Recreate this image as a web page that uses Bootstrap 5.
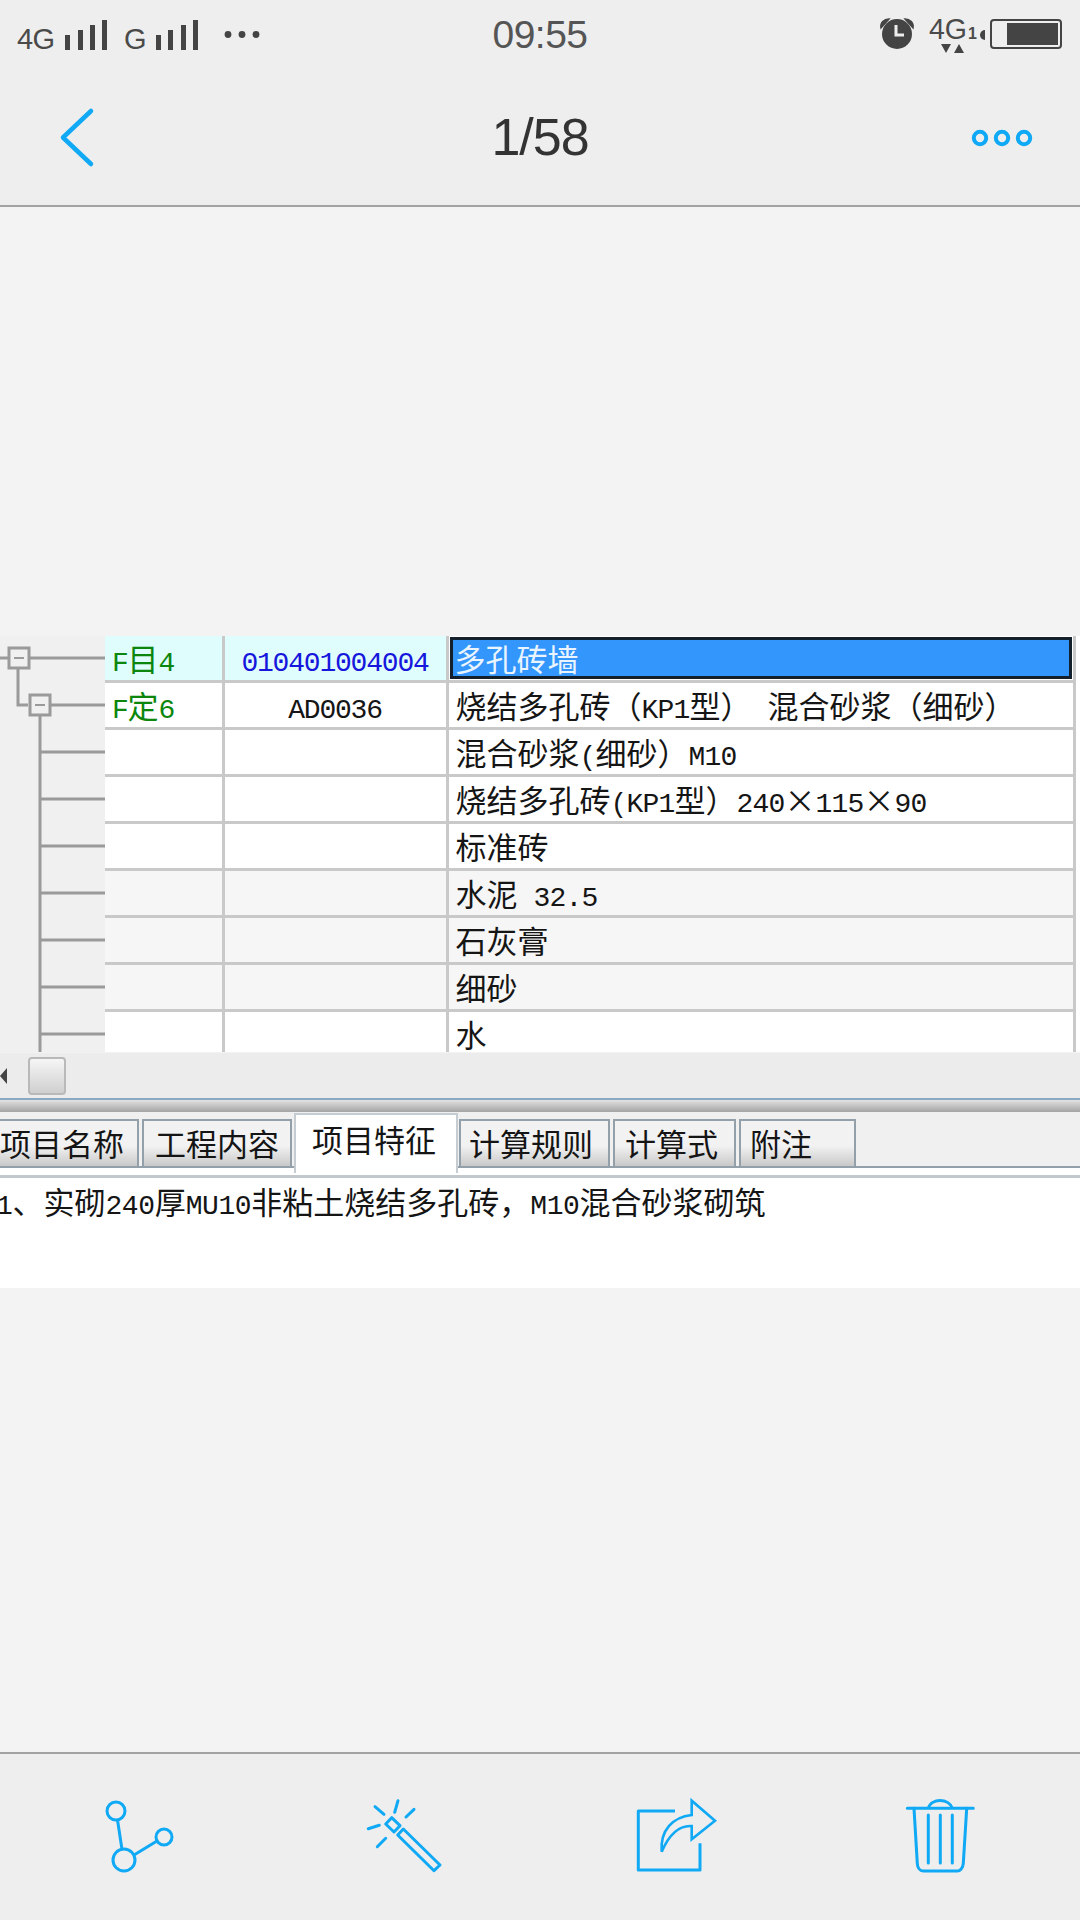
<!DOCTYPE html>
<html lang="zh-CN">
<head>
    <meta charset="UTF-8">
    <meta name="viewport" content="width=device-width, initial-scale=1.0">
    <title>1/58</title>
    <link href="https://cdn.jsdelivr.net/npm/bootstrap@5.3.0/dist/css/bootstrap.min.css" rel="stylesheet">
    <style>
        body {
            background-color: #f3f3f3;
            font-family: "Liberation Sans", Arial, sans-serif;
            width: 1080px;
        }
        .phone-page { height: 1920px; overflow: hidden; }
        .top-area { background: #eeeeee; height: 207px; border-bottom: 2px solid #a2a2a2; }
        .status-row { height: 68px; position: relative; }
        .status-icons { position: absolute; inset: 0; }
        .status-text { fill: #4a4a4a; font-family: "Liberation Sans", Arial, sans-serif; }
        .clock-text { font-size: 39px; color: #555; line-height: 70px; letter-spacing: -.5px; }
        .title-row { height: 137px; position: relative; }
        .page-title { font-size: 52px; color: #333; letter-spacing: -1px; line-height: 138px; }
        .title-icon { position: absolute; top: 0; }

        .viewer { padding-top: 429px; flex: 1 1 auto; }
        .tree-col { width: 105px; height: 416px; background: #f0f0f0; flex: none; }
        .grid-wrap { height: 416px; overflow: hidden; flex: 1 1 auto; background: #fff; }
        .quota-table, .desc-box, .sheet-tabs .nav-link {
            font-family: "Noto Sans CJK SC", "Liberation Sans", sans-serif;
            font-size: 31px;
            color: #151515;
        }
        .lat { font-family: "Liberation Mono", monospace; font-size: 28px; letter-spacing: -.8px; line-height: 1; }
        .code-cell .lat { letter-spacing: -1.2px; }
        .desc-box .lat { letter-spacing: -.4px; }
        .fw-x { font-feature-settings: "fwid"; font-family: "Noto Sans CJK SC", sans-serif; font-size: 31px; line-height: 1; }
        .quota-table { table-layout: fixed; width: 971px; margin: 0; border-collapse: collapse; }
        .quota-table > :not(caption) > * > * {
            padding: 0 0 0 7px;
            height: 47px;
            line-height: 44px;
            border: 3px solid #c9c9c9;
            border-top-width: 0;
            border-left-width: 0;
            white-space: nowrap;
            overflow: hidden;
            box-shadow: none;
            color: #151515;
        }
        .quota-table tr { --bs-table-bg: #fff; }
        .quota-table tr.row-cyan { --bs-table-bg: #dffdfd; }
        .quota-table tr.row-shade { --bs-table-bg: #f6f6f6; }
        .quota-table > tbody > tr.row-cyan > td { height: 45px; }
        .quota-table td.code-cell { text-align: center; padding-left: 0; }
        .quota-table td.kind-cell { color: #0c860c; }
        .quota-table td.kind-cell .lat { letter-spacing: -1.2px; }
        .quota-table td.blue-text { color: #1616dc; }
        .quota-table td.sel-host { padding: 0; background: #fff; }
        .sel-box {
            background: #3396fd;
            color: #eaf4ff;
            border: 3px solid #14202c;
            height: 42px;
            line-height: 36px;
            padding-left: 2px;
            margin: 1px 0 0 1px;
            width: 622px;
        }

        .scroll-row { height: 45px; background: #ececec; margin-top: 1px; position: relative; }
        .scroll-arrow {
            width: 0; height: 0;
            border-top: 8px solid transparent;
            border-bottom: 8px solid transparent;
            border-right: 7px solid #444;
        }
        .scroll-thumb {
            width: 38px; height: 38px;
            margin-left: 21px;
            border: 2px solid #b9b9b9;
            border-radius: 4px;
            background: linear-gradient(#f6f6f6, #cfcfcf);
        }
        .split-bar { height: 14px; border-top: 2px solid #8aa9c2; background: linear-gradient(#e2e2e2, #a4a4a4); }
        .tabs-zone { height: 56px; background: #f0f0f0; }
        .sheet-tabs { padding-top: 7px; border-bottom: 2px solid #93a0aa; height: 56px; flex-wrap: nowrap; gap: 3px; }
        .sheet-tabs .nav-link {
            height: 49px;
            line-height: 44px;
            padding: 0;
            margin: 0;
            border: 2px solid #93a0aa;
            border-radius: 0;
            background: linear-gradient(#f2f2f2 55%, #c9c9c9);
            text-align: left;
        }
        .sheet-tabs .nav-link.active {
            height: 60px;
            margin-top: -6px;
            line-height: 48px;
            background: #fff;
            border-color: #c5ccd2;
            border-bottom: 0;
            color: #151515;
            position: relative;
        }
        .tab-a { width: 142px; margin-left: -3px !important; padding-left: 1px !important; }
        .tab-b { width: 150px; padding-left: 11px !important; }
        .tab-c { width: 164px; padding-left: 16px !important; margin-left: -1px !important; }
        .tab-d { width: 151px; padding-left: 8px !important; margin-left: -2px !important; }
        .tab-e { width: 123px; padding-left: 10px !important; }
        .tab-f { width: 117px; padding-left: 9px !important; }
        .desc-gap { height: 10px; background: #fff; border-bottom: 3px solid #c3c8cc; }
        .desc-box { background: #fff; height: 110px; line-height: 40px; padding-top: 3px; white-space: nowrap; margin-left: -4px; }

        .bottom-bar { height: 168px; background: #eeeeee; border-top: 2px solid #a2a2a2; flex: none; padding-bottom: 4px; }
    </style>
</head>
<body>
    <div class="phone-page d-flex flex-column">

        <!-- status bar and title -->
        <div class="top-area flex-none">
            <div class="status-row text-center">
                <svg class="status-icons" width="1080" height="68">
                    <text class="status-text" x="17" y="49" font-size="29" textLength="38">4G</text>
                    <g fill="#444">
                        <rect x="65" y="35" width="5" height="15"/><rect x="78" y="30" width="5" height="20"/>
                        <rect x="90" y="25" width="5" height="25"/><rect x="102" y="20" width="5" height="30"/>
                    </g>
                    <text class="status-text" x="124" y="49" font-size="29">G</text>
                    <g fill="#444">
                        <rect x="156" y="35" width="5" height="15"/><rect x="168" y="30" width="5" height="20"/>
                        <rect x="181" y="25" width="5" height="25"/><rect x="193" y="20" width="5" height="30"/>
                        <circle cx="228" cy="34.5" r="3.4"/><circle cx="242" cy="34.5" r="3.4"/><circle cx="256" cy="34.5" r="3.4"/>
                    </g>
                    <!-- alarm -->
                    <g>
                        <circle cx="897" cy="34" r="15" fill="#444"/>
                        <path d="M896 25v10h8" fill="none" stroke="#eee" stroke-width="3"/>
                        <path d="M881 28c-1-5 3-9 8-9l-8 9zM913 28c1-5-3-9-8-9l8 9z" fill="#444" stroke="#444" stroke-width="1.5"/>
                    </g>
                    <text class="status-text" x="929" y="39" font-size="30" textLength="38" lengthAdjust="spacingAndGlyphs">4G</text>
                    <text class="status-text" x="968" y="39" font-size="16" font-weight="700">1</text>
                    <path d="M941 44h10l-5 9zM954 53h10l-5-9z" fill="#444"/>
                    <!-- battery -->
                    <path d="M985 30a5 5 0 0 0 0 10z" fill="#444"/>
                    <rect x="991" y="20" width="70" height="28" rx="3" fill="none" stroke="#444" stroke-width="2"/>
                    <rect x="1007" y="23" width="51" height="22" fill="#444"/>
                </svg>
                <span class="clock-text">09:55</span>
            </div>
            <div class="title-row text-center">
                <svg class="title-icon" style="left:0" width="120" height="137">
                    <path d="M91 43 63 69.500 91 96" fill="none" stroke="#0fa9f5" stroke-width="4.500" stroke-linecap="round" stroke-linejoin="round"/>
                </svg>
                <div class="page-title">1/58</div>
                <svg class="title-icon" style="right:0" width="120" height="137">
                    <g fill="none" stroke="#0fa9f5" stroke-width="4">
                        <circle cx="20" cy="70" r="6.200"/><circle cx="42" cy="70" r="6.200"/><circle cx="64" cy="70" r="6.200"/>
                    </g>
                </svg>
            </div>
        </div>

        <!-- captured software window -->
        <div class="viewer">
            <div class="d-flex">
                <div class="tree-col">
                    <svg width="105" height="416">
                        <g fill="none" stroke="#9a9a9a" stroke-width="3">
                            <path d="M0 22H8M29 22H105M18 32V69H28M51 69H105M40 80V416"/>
                            <path d="M40 116H105M40 163H105M40 210H105M40 257H105M40 304H105M40 351H105M40 398H105"/>
                            <rect x="9" y="12" width="20" height="20" fill="#f0f0f0"/>
                            <rect x="30" y="59" width="20" height="20" fill="#f0f0f0"/>
                            <path d="M14 22H24M35 69H45" stroke-width="2"/>
                        </g>
                    </svg>
                </div>
                <div class="grid-wrap">
                    <table class="table quota-table">
                        <colgroup><col style="width:118px"><col style="width:224px"><col></colgroup>
                        <tbody>
                            <tr class="row-cyan">
                                <td class="kind-cell"><span class="lat">F</span>目<span class="lat">4</span></td>
                                <td class="code-cell blue-text"><span class="lat">010401004004</span></td>
                                <td class="sel-host"><div class="sel-box">多孔砖墙</div></td>
                            </tr>
                            <tr>
                                <td class="kind-cell"><span class="lat">F</span>定<span class="lat">6</span></td>
                                <td class="code-cell"><span class="lat">AD0036</span></td>
                                <td>烧结多孔砖（<span class="lat">KP1</span>型）<span class="lat"> </span>混合砂浆（细砂）</td>
                            </tr>
                            <tr><td></td><td></td><td>混合砂浆<span class="lat">(</span>细砂）<span class="lat">M10</span></td></tr>
                            <tr><td></td><td></td><td>烧结多孔砖<span class="lat">(KP1</span>型）<span class="lat">240</span><span class="fw-x">×</span><span class="lat">115</span><span class="fw-x">×</span><span class="lat">90</span></td></tr>
                            <tr><td></td><td></td><td>标准砖</td></tr>
                            <tr class="row-shade"><td></td><td></td><td>水泥<span class="lat"> 32.5</span></td></tr>
                            <tr class="row-shade"><td></td><td></td><td>石灰膏</td></tr>
                            <tr class="row-shade"><td></td><td></td><td>细砂</td></tr>
                            <tr><td></td><td></td><td>水</td></tr>
                        </tbody>
                    </table>
                </div>
            </div>

            <div class="scroll-row d-flex align-items-center">
                <div class="scroll-arrow"></div>
                <div class="scroll-thumb"></div>
            </div>
            <div class="split-bar"></div>

            <div class="tabs-zone">
                <ul class="nav nav-tabs sheet-tabs">
                    <li class="nav-item"><a class="nav-link tab-a" href="#">项目名称</a></li>
                    <li class="nav-item"><a class="nav-link tab-b" href="#">工程内容</a></li>
                    <li class="nav-item"><a class="nav-link active tab-c" href="#">项目特征</a></li>
                    <li class="nav-item"><a class="nav-link tab-d" href="#">计算规则</a></li>
                    <li class="nav-item"><a class="nav-link tab-e" href="#">计算式</a></li>
                    <li class="nav-item"><a class="nav-link tab-f" href="#">附注</a></li>
                </ul>
            </div>
            <div class="desc-gap"></div>
            <div class="desc-box"><span class="lat">1</span>、实砌<span class="lat">240</span>厚<span class="lat">MU10</span>非粘土烧结多孔砖，<span class="lat">M10</span>混合砂浆砌筑</div>
        </div>

        <!-- bottom toolbar -->
        <div class="bottom-bar d-flex justify-content-around align-items-center">
            <svg width="100" height="90" fill="none" stroke="#0fa9f5" stroke-width="3">
                <circle cx="31" cy="21" r="9"/><circle cx="39" cy="70" r="11"/><circle cx="79" cy="47" r="8"/>
                <path d="M32.500 30 37 59.500M49 65 72 51"/>
            </svg>
            <svg width="100" height="90" fill="none" stroke="#0fa9f5" stroke-width="3" stroke-linecap="round" stroke-linejoin="round">
                <path d="M48.300 39 85 75 79 80.700 42.700 45Z"/>
                <path d="M36.700 27.700 45 35.700 39 42 30.700 34Z"/>
                <path d="M20 16.700 29 24.300M43 10.700 39.700 22.300M59 19.300 51 27M24.300 35.300 13.300 38.700M30.700 48.300 22.300 56.700"/>
            </svg>
            <svg width="100" height="90" fill="none" stroke="#0fa9f5" stroke-width="3" stroke-linejoin="round">
                <path d="M50 21H13.300V80H75V53.300"/>
                <path stroke-width="2.600" stroke-linejoin="miter" d="M36.700 61.700C35 40 48 27 66.700 25V10.700L90 30.700 66.700 49.300V36C52 35 43 47 36.700 61.700Z"/>
            </svg>
            <svg width="100" height="90" fill="none" stroke="#0fa9f5" stroke-width="3" stroke-linecap="round">
                <path d="M12.300 18.300H78.300M33.300 18.300C36 8 54 8 57.300 18.300"/>
                <path d="M19 18.300 22.300 73.300C22.500 78 25 81 28.300 81H62.300C65 81 68 78 68.300 73.300L71.700 18.300"/>
                <path d="M33.300 25V73M45.300 25V73M57.300 25V73"/>
            </svg>
        </div>
    </div>
    <script src="https://cdn.jsdelivr.net/npm/bootstrap@5.3.0/dist/js/bootstrap.bundle.min.js"></script>
</body>
</html>
